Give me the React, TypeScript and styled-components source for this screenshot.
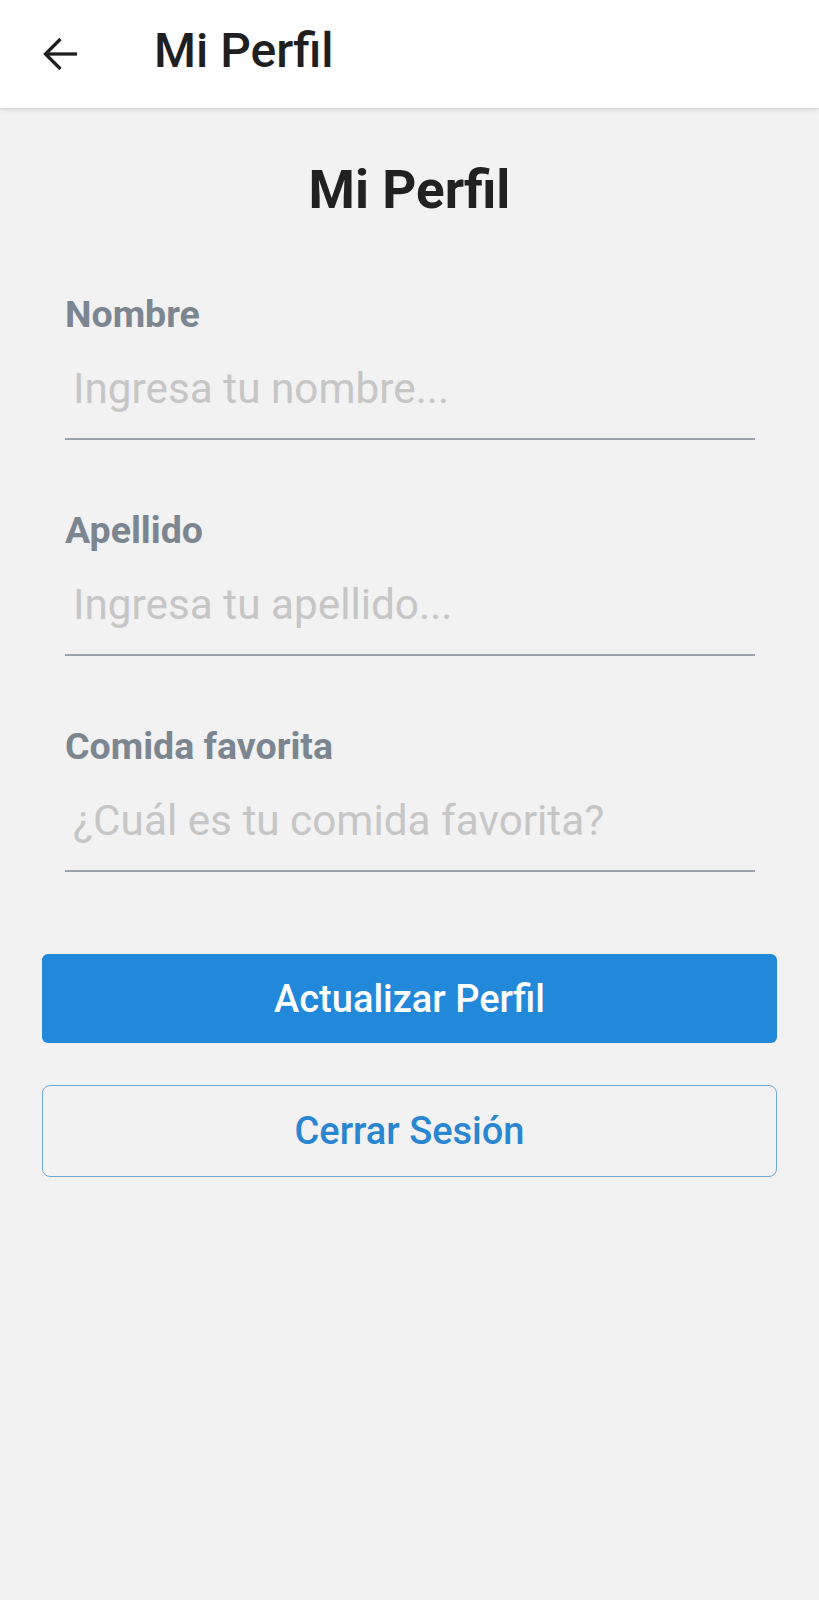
import React from "react";
import styled, { createGlobalStyle } from "styled-components";

const GlobalStyle = createGlobalStyle`
  html, body {
    margin: 0;
    padding: 0;
    background: #f2f2f2;
    font-family: Roboto, "Noto Sans", Arial, sans-serif;
  }
  * { box-sizing: border-box; }
`;

const Screen = styled.div`
  min-height: 1600px;
  background: #f2f2f2;
  display: flex;
  flex-direction: column;
`;

const AppBar = styled.header`
  height: 108px;
  background: #ffffff;
  display: flex;
  align-items: center;
  padding-left: 43px;
  box-shadow: 0 1px 2px rgba(0, 0, 0, 0.1), 0 3px 6px rgba(0, 0, 0, 0.06);
  position: relative;
  z-index: 1;
`;

const BackButton = styled.button`
  border: none;
  background: transparent;
  padding: 0;
  width: 34px;
  height: 34px;
  display: flex;
  align-items: center;
  justify-content: center;
  color: #1f1f1f;
  cursor: pointer;
`;

const AppBarTitle = styled.h1`
  margin: 0 0 0 77px;
  font-size: 48px;
  font-weight: 500;
  color: #1f1f1f;
  line-height: 56px;
  padding-bottom: 6px;
`;

const Content = styled.main`
  padding: 52px 42px 0;
  display: flex;
  flex-direction: column;
`;

const PageTitle = styled.h2`
  margin: 0;
  text-align: center;
  font-size: 53px;
  font-weight: 700;
  line-height: 60px;
  color: #212121;
`;

const Form = styled.form`
  margin-top: 73px;
  padding: 0 22px 0 23px;
  display: flex;
  flex-direction: column;
  gap: 69px;
`;

const Field = styled.div`
  display: flex;
  flex-direction: column;
`;

const Label = styled.label`
  font-size: 37.5px;
  font-weight: 700;
  line-height: 42px;
  color: #7b8691;
  margin-bottom: 4px;
`;

const Input = styled.input`
  height: 101px;
  border: none;
  border-bottom: 2px solid #9aa2ad;
  background: transparent;
  padding: 0 8px;
  font-family: Roboto, "Noto Sans", Arial, sans-serif;
  font-size: 42.3px;
  color: #333;
  outline: none;
  &::placeholder {
    color: #c6c6c6;
  }
`;

const Actions = styled.div`
  margin-top: 82px;
  display: flex;
  flex-direction: column;
  gap: 42px;
`;

const Button = styled.button<{ $variant: "primary" | "outline" }>`
  width: 100%;
  font-family: Roboto, "Noto Sans", Arial, sans-serif;
  font-size: 38px;
  font-weight: 500;
  cursor: pointer;
  display: flex;
  align-items: center;
  justify-content: center;
  ${(p) =>
    p.$variant === "primary"
      ? `
    height: 89px;
    background: #2188da;
    color: #ffffff;
    border: none;
    border-radius: 6px;
  `
      : `
    height: 92px;
    background: transparent;
    color: #2a86d0;
    border: 1px solid #6ea8d8;
    border-radius: 8px;
  `}
`;

const ArrowIcon = () => (
  <svg width="34" height="34" viewBox="0 0 34 34" fill="none">
    <path d="M3 17H34" stroke="currentColor" strokeWidth="3.3" />
    <path d="M17.5 2L2.5 17L17.5 32" stroke="currentColor" strokeWidth="3.3" />
  </svg>
);

const fields = [
  { id: "nombre", label: "Nombre", placeholder: "Ingresa tu nombre..." },
  { id: "apellido", label: "Apellido", placeholder: "Ingresa tu apellido..." },
  { id: "comida", label: "Comida favorita", placeholder: "¿Cuál es tu comida favorita?" },
];

export default function App() {
  return (
    <>
      <GlobalStyle />
      <Screen>
        <AppBar>
          <BackButton aria-label="Volver">
            <ArrowIcon />
          </BackButton>
          <AppBarTitle>Mi Perfil</AppBarTitle>
        </AppBar>
        <Content>
          <PageTitle>Mi Perfil</PageTitle>
          <Form onSubmit={(e) => e.preventDefault()}>
            {fields.map((f) => (
              <Field key={f.id}>
                <Label htmlFor={f.id}>{f.label}</Label>
                <Input id={f.id} placeholder={f.placeholder} />
              </Field>
            ))}
          </Form>
          <Actions>
            <Button $variant="primary">Actualizar Perfil</Button>
            <Button $variant="outline">Cerrar Sesión</Button>
          </Actions>
        </Content>
      </Screen>
    </>
  );
}
